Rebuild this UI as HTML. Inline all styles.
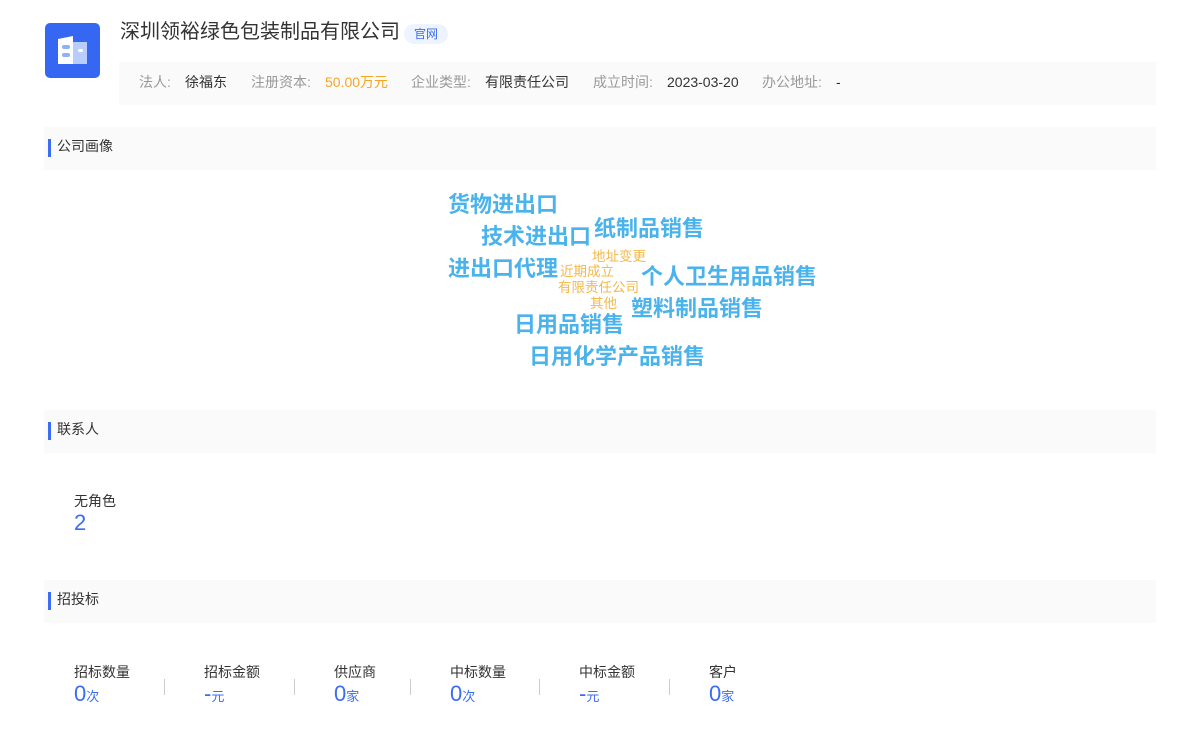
<!DOCTYPE html>
<html><head><meta charset="utf-8"><style>
body{margin:0;width:1200px;height:752px;background:#fff;position:relative;font-family:"Liberation Sans","Noto Sans CJK SC",sans-serif;overflow:hidden}
.a{position:absolute;white-space:nowrap}
.sec{position:absolute;left:44px;width:1112px;height:43px;background:#fafafa}
.sec i{position:absolute;left:4px;top:12px;width:3px;height:18px;background:#3a6cf4}
.sec span{position:absolute;left:13px;top:0;line-height:39px;font-size:14px;color:#333}
.w{position:absolute;white-space:nowrap;color:#4ab3ec;font-size:22px;line-height:22px;font-weight:bold}
.o{position:absolute;white-space:nowrap;color:#f5b84a;font-size:13.5px;line-height:14px}
.lab{color:#999}.val{color:#333}
.st{position:absolute;top:663px}
.st .l{font-size:14px;color:#333;line-height:18px}
.st .v{font-size:22px;color:#3a6cf4;line-height:26px}
.st .v small{font-size:13px}
.dv{position:absolute;top:679px;width:1px;height:16px;background:#ccc}
</style></head><body>
<div class="a" style="left:45px;top:23px;width:55px;height:55px;border-radius:5px;background:#3567f3">
<svg width="55" height="55" viewBox="0 0 55 55"><path d="M13 16 L28 13 L28 41 L13 41 Z" fill="#fff"/><rect x="28" y="19" width="14" height="22" fill="#b8cdfb"/><rect x="17" y="22" width="8" height="4" rx="2" fill="#8fb0f8"/><rect x="17" y="30" width="8" height="4" rx="2" fill="#8fb0f8"/><rect x="33" y="26" width="5" height="3" rx="1.5" fill="#fff"/></svg></div>
<div class="a" style="left:120px;top:19px;font-size:20px;line-height:26px;color:#333">深圳领裕绿色包装制品有限公司</div>
<div class="a" style="left:404px;top:24px;width:44px;height:20px;border-radius:10px;background:#eef4ff;color:#3a6cf4;font-size:12px;line-height:20px;text-align:center">官网</div>
<div class="a" style="left:119px;top:62px;width:1037px;height:43px;background:#fafafa"></div>
<div class="a" style="top:73px;font-size:14px;line-height:18px;left:139px"><span class="lab">法人:</span></div>
<div class="a val" style="top:73px;font-size:14px;line-height:18px;left:185px">徐福东</div>
<div class="a lab" style="top:73px;font-size:14px;line-height:18px;left:251px">注册资本:</div>
<div class="a" style="top:73px;font-size:14px;line-height:18px;left:325px;color:#f5a623">50.00万元</div>
<div class="a lab" style="top:73px;font-size:14px;line-height:18px;left:411px">企业类型:</div>
<div class="a val" style="top:73px;font-size:14px;line-height:18px;left:485px">有限责任公司</div>
<div class="a lab" style="top:73px;font-size:14px;line-height:18px;left:593px">成立时间:</div>
<div class="a val" style="top:73px;font-size:14px;line-height:18px;left:667px">2023-03-20</div>
<div class="a lab" style="top:73px;font-size:14px;line-height:18px;left:762px">办公地址:</div>
<div class="a val" style="top:73px;font-size:14px;line-height:18px;left:836px">-</div>

<div class="sec" style="top:127px"><i></i><span>公司画像</span></div>
<div class="w" style="left:448px;top:194px">货物进出口</div>
<div class="w" style="left:481px;top:226px">技术进出口</div>
<div class="w" style="left:594px;top:218px">纸制品销售</div>
<div class="w" style="left:448px;top:258px">进出口代理</div>
<div class="o" style="left:592px;top:250px">地址变更</div>
<div class="o" style="left:560px;top:265px">近期成立</div>
<div class="o" style="left:558px;top:281px">有限责任公司</div>
<div class="o" style="left:590px;top:297px">其他</div>
<div class="w" style="left:641px;top:266px">个人卫生用品销售</div>
<div class="w" style="left:631px;top:298px">塑料制品销售</div>
<div class="w" style="left:514px;top:314px">日用品销售</div>
<div class="w" style="left:529px;top:346px">日用化学产品销售</div>

<div class="sec" style="top:410px"><i></i><span>联系人</span></div>
<div class="a" style="left:74px;top:492px;font-size:14px;line-height:18px;color:#333">无角色</div>
<div class="a" style="left:74px;top:510px;font-size:22px;line-height:26px;color:#3a6cf4">2</div>

<div class="sec" style="top:580px"><i></i><span>招投标</span></div>
<div class="st" style="left:74px"><div class="l">招标数量</div><div class="v">0<small>次</small></div></div>
<div class="dv" style="left:164px"></div>
<div class="st" style="left:204px"><div class="l">招标金额</div><div class="v">-<small>元</small></div></div>
<div class="dv" style="left:294px"></div>
<div class="st" style="left:334px"><div class="l">供应商</div><div class="v">0<small>家</small></div></div>
<div class="dv" style="left:410px"></div>
<div class="st" style="left:450px"><div class="l">中标数量</div><div class="v">0<small>次</small></div></div>
<div class="dv" style="left:539px"></div>
<div class="st" style="left:579px"><div class="l">中标金额</div><div class="v">-<small>元</small></div></div>
<div class="dv" style="left:669px"></div>
<div class="st" style="left:709px"><div class="l">客户</div><div class="v">0<small>家</small></div></div>
</body></html>
